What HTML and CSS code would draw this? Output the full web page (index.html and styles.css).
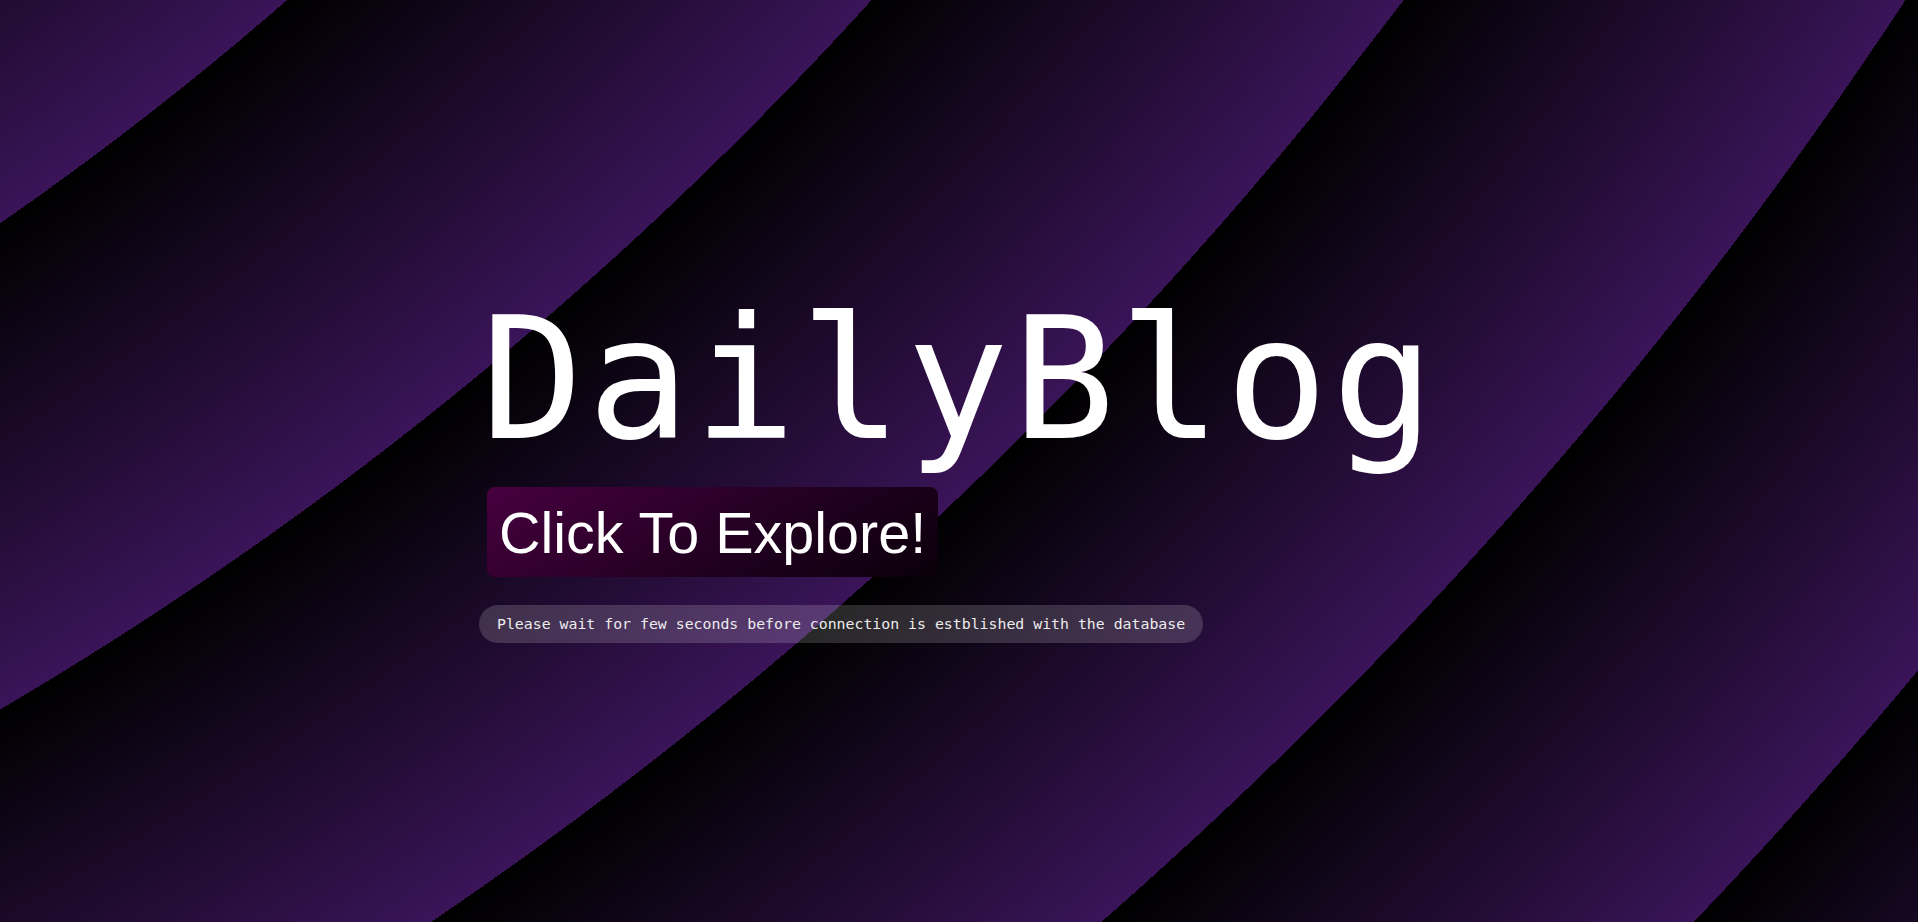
FILE: index.html
```html
<!DOCTYPE html>
<html lang="en">
<head>
<meta charset="utf-8">
<title>DailyBlog</title>
<link rel="stylesheet" href="styles.css">
</head>
<body>
<main class="hero">
  <h1 class="title">DailyBlog</h1>
  <button class="explore">Click To Explore!</button>
  <p class="notice">Please wait for few seconds before connection is estblished with the database</p>
</main>
</body>
</html>
```

FILE: styles.css
```css
html, body {
  margin: 0;
  height: 100%;
}

body {
  min-height: 922px;
  overflow: hidden;
  background-color: #000;
  background-image: repeating-radial-gradient(circle at -1880px -2490px, #000 21px, #3a1458 431px);
}

.hero {
  width: 960px;
  margin: 0 auto;
  padding-top: 289px;
  display: flex;
  flex-direction: column;
  align-items: flex-start;
}

.title {
  margin: 0 0 18px 2px;
  font-family: "DejaVu Sans Mono", "Liberation Mono", monospace;
  font-size: 170px;
  font-weight: normal;
  line-height: 180px;
  letter-spacing: 4px;
  color: #fff;
}

.explore {
  margin: 0 0 28px 8px;
  padding: 13px 12px 11px;
  border: none;
  border-radius: 8px;
  font-family: "Liberation Sans", Arial, sans-serif;
  font-size: 57.5px;
  line-height: 66px;
  color: #fff;
  background: linear-gradient(150deg, #47003f 0%, #230022 55%, #0a000a 100%);
  cursor: pointer;
}

.notice {
  margin: 0;
  height: 38px;
  padding: 0 18px;
  border-radius: 19px;
  font-family: "DejaVu Sans Mono", "Liberation Mono", monospace;
  font-size: 14.85px;
  line-height: 38px;
  color: #ececec;
  background: rgba(255, 255, 255, 0.16);
  white-space: nowrap;
}
```
